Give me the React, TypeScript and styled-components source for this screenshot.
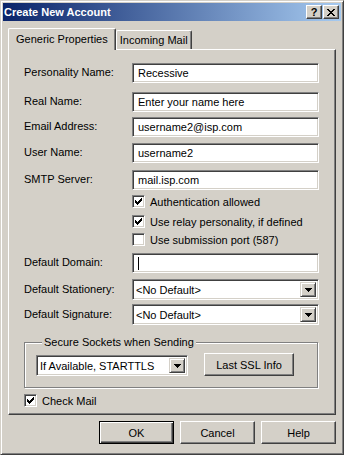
import React from 'react'
import styled, { createGlobalStyle } from 'styled-components'

const GlobalStyle = createGlobalStyle`
  html, body {
    margin: 0;
    padding: 0;
    background: #d4d0c8;
  }
  body {
    font-family: 'Liberation Sans', Arial, sans-serif;
    font-size: 11px;
    color: #000;
  }
`

const Window = styled.div`
  box-sizing: border-box;
  width: 344px;
  height: 455px;
  display: flex;
  flex-direction: column;
  background: #d4d0c8;
  border: 1px solid;
  border-color: #d4d0c8 #404040 #404040 #d4d0c8;
  box-shadow: inset 1px 1px #fff, inset -1px -1px #808080;
  padding: 2px;
`

const TitleBar = styled.div`
  height: 18px;
  display: flex;
  align-items: center;
  padding: 0 2px 0 1px;
  background: linear-gradient(to right, #0a246a, #a6caf0);
`

const TitleText = styled.div`
  flex: 1;
  color: #fff;
  font-weight: bold;
  font-size: 11px;
  line-height: 18px;
  white-space: nowrap;
`

const CaptionButton = styled.div<{ $gap?: number }>`
  box-sizing: border-box;
  width: 16px;
  height: 14px;
  margin-left: ${(p) => p.$gap ?? 0}px;
  display: flex;
  align-items: center;
  justify-content: center;
  background: #d4d0c8;
  border: 1px solid;
  border-color: #fff #404040 #404040 #fff;
  box-shadow: inset -1px -1px #808080;
  font-weight: bold;
  font-size: 11px;
  line-height: 12px;
`

const Body = styled.div`
  flex: 1;
  display: flex;
  flex-direction: column;
  padding: 7px 5px 6px 5px;
`

const TabStrip = styled.div`
  height: 22px;
  display: flex;
  align-items: flex-end;
  position: relative;
  z-index: 1;
`

const Tab = styled.div<{ $active?: boolean }>`
  box-sizing: border-box;
  height: ${(p) => (p.$active ? 22 : 19)}px;
  margin-bottom: ${(p) => (p.$active ? 0 : 1)}px;
  padding: 0 ${(p) => (p.$active ? 7 : 3)}px;
  padding-bottom: ${(p) => (p.$active ? 2 : 0)}px;
  display: flex;
  align-items: center;
  background: #d4d0c8;
  border-top: 1px solid #fff;
  border-left: 1px solid #fff;
  border-right: 1px solid #404040;
  border-top-left-radius: 2px;
  border-top-right-radius: 2px;
  box-shadow: inset -1px 0 #808080;
  white-space: nowrap;
`

const Panel = styled.div`
  box-sizing: border-box;
  height: 366px;
  margin-top: -1px;
  border: 1px solid;
  border-color: #fff #404040 #404040 #fff;
  box-shadow: inset -1px -1px #808080;
  padding: 13px 13px 0 15px;
  display: flex;
  flex-direction: column;
`

const FormRow = styled.div<{ $gap: number; $height?: number }>`
  display: grid;
  grid-template-columns: 108px 187px;
  align-items: center;
  height: ${(p) => p.$height ?? 20}px;
  margin-top: ${(p) => p.$gap}px;
`

const Label = styled.div`
  white-space: nowrap;
  line-height: 13px;
  padding-bottom: 1px;
`

const Field = styled.div`
  box-sizing: border-box;
  height: 100%;
  display: flex;
  align-items: center;
  background: #fff;
  border: 1px solid;
  border-color: #808080 #fff #fff #808080;
  box-shadow: inset 1px 1px #404040, inset -1px -1px #d4d0c8;
  padding: 1px 3px 1px 5px;
  white-space: nowrap;
  overflow: hidden;
`

const Caret = styled.span`
  width: 1px;
  height: 13px;
  background: #000;
`

const ComboBox = styled.div<{ $width?: number }>`
  box-sizing: border-box;
  width: ${(p) => (p.$width ? `${p.$width}px` : '100%')};
  height: 100%;
  display: flex;
  align-items: center;
  background: #fff;
  border: 1px solid;
  border-color: #808080 #fff #fff #808080;
  box-shadow: inset 1px 1px #404040, inset -1px -1px #d4d0c8;
  padding: 2px 2px 2px 3px;
`

const ComboText = styled.div`
  flex: 1;
  white-space: nowrap;
  overflow: hidden;
`

const DropButton = styled.div`
  box-sizing: border-box;
  width: 16px;
  height: 100%;
  display: flex;
  align-items: center;
  justify-content: center;
  background: #d4d0c8;
  border: 1px solid;
  border-color: #d4d0c8 #404040 #404040 #d4d0c8;
  box-shadow: inset 1px 1px #fff, inset -1px -1px #808080;
`

const CheckRow = styled.div<{ $gap: number; $column?: number }>`
  display: flex;
  align-items: center;
  gap: 5px;
  height: 13px;
  margin-top: ${(p) => p.$gap}px;
  margin-left: ${(p) => (p.$column === 2 ? 108 : 0)}px;
  white-space: nowrap;
`

const CheckBox = styled.span`
  box-sizing: border-box;
  width: 13px;
  height: 13px;
  flex: none;
  display: flex;
  align-items: center;
  justify-content: center;
  background: #fff;
  border: 1px solid;
  border-color: #808080 #fff #fff #808080;
  box-shadow: inset 1px 1px #404040, inset -1px -1px #d4d0c8;
`

const Group = styled.fieldset`
  box-sizing: border-box;
  width: 294px;
  min-width: 0;
  margin: 11px 0 0 0;
  padding: 4px 11px 11px 11px;
  border: 1px solid #808080;
  box-shadow: inset 1px 1px #fff, 1px 1px #fff;
  display: flex;
  align-items: flex-end;
  gap: 16px;
`

const Legend = styled.legend`
  margin-left: 6px;
  padding: 0 2px;
  line-height: 13px;
  background: #d4d0c8;
`

const GroupCombo = styled.div`
  height: 21px;
  display: flex;
`

const ButtonRow = styled.div`
  display: flex;
  justify-content: flex-end;
  gap: 6px;
  margin-top: 6px;
`

const Button = styled.div<{ $width?: number; $default?: boolean }>`
  box-sizing: border-box;
  width: ${(p) => p.$width ?? 75}px;
  height: 23px;
  display: flex;
  align-items: center;
  justify-content: center;
  background: #d4d0c8;
  border: 1px solid;
  border-color: ${(p) => (p.$default ? '#000' : '#fff #404040 #404040 #fff')};
  box-shadow: ${(p) =>
    p.$default
      ? 'inset 1px 1px #fff, inset -1px -1px #404040, inset -2px -2px #808080'
      : 'inset -1px -1px #808080'};
  white-space: nowrap;
`

const CheckMark = () => (
  <svg width="7" height="7" viewBox="0 0 7 7" shapeRendering="crispEdges">
    <path
      fill="#000"
      d="M6 0h1v1h-1z M5 1h2v1h-2z M0 2h1v1h-1z M4 2h3v1h-3z M0 3h2v1h-2z M3 3h3v1h-3z M0 4h5v1h-5z M1 5h3v1h-3z M2 6h1v1h-1z"
    />
  </svg>
)

const Arrow = () => (
  <svg width="7" height="4" viewBox="0 0 7 4" shapeRendering="crispEdges">
    <path fill="#000" d="M0 0h7v1h-7z M1 1h5v1h-5z M2 2h3v1h-3z M3 3h1v1h-1z" />
  </svg>
)

const CloseGlyph = () => (
  <svg width="8" height="7" viewBox="0 0 8 7" shapeRendering="crispEdges">
    <path
      fill="#000"
      d="M0 0h2v1h-2z M6 0h2v1h-2z M1 1h2v1h-2z M5 1h2v1h-2z M2 2h4v1h-4z M3 3h2v1h-2z M2 4h4v1h-4z M1 5h2v1h-2z M5 5h2v1h-2z M0 6h2v1h-2z M6 6h2v1h-2z"
    />
  </svg>
)

const Check = ({ checked, label, gap, column }: { checked?: boolean; label: string; gap: number; column?: number }) => (
  <CheckRow $gap={gap} $column={column}>
    <CheckBox>{checked && <CheckMark />}</CheckBox>
    <span>{label}</span>
  </CheckRow>
)

const Combo = ({ value, width }: { value: string; width?: number }) => (
  <ComboBox $width={width}>
    <ComboText>{value}</ComboText>
    <DropButton>
      <Arrow />
    </DropButton>
  </ComboBox>
)

const textFields = [
  { label: 'Personality Name:', value: 'Recessive', gap: 0 },
  { label: 'Real Name:', value: 'Enter your name here', gap: 9 },
  { label: 'Email Address:', value: 'username2@isp.com', gap: 5 },
  { label: 'User Name:', value: 'username2', gap: 6 },
  { label: 'SMTP Server:', value: 'mail.isp.com', gap: 7 },
]

export default function App() {
  return (
    <>
      <GlobalStyle />
      <Window>
        <TitleBar>
          <TitleText>Create New Account</TitleText>
          <CaptionButton>?</CaptionButton>
          <CaptionButton $gap={1}>
            <CloseGlyph />
          </CaptionButton>
        </TitleBar>
        <Body>
          <TabStrip>
            <Tab $active>Generic Properties</Tab>
            <Tab>Incoming Mail</Tab>
          </TabStrip>
          <Panel>
            {textFields.map((f) => (
              <FormRow key={f.label} $gap={f.gap}>
                <Label>{f.label}</Label>
                <Field>{f.value}</Field>
              </FormRow>
            ))}
            <Check checked label="Authentication allowed" gap={5} column={2} />
            <Check checked label="Use relay personality, if defined" gap={7} column={2} />
            <Check label="Use submission port (587)" gap={5} column={2} />
            <FormRow $gap={7}>
              <Label>Default Domain:</Label>
              <Field>
                <Caret />
              </Field>
            </FormRow>
            <FormRow $gap={6} $height={21}>
              <Label>Default Stationery:</Label>
              <Combo value="<No Default>" />
            </FormRow>
            <FormRow $gap={4} $height={21}>
              <Label>Default Signature:</Label>
              <Combo value="<No Default>" />
            </FormRow>
            <Group>
              <Legend>Secure Sockets when Sending</Legend>
              <GroupCombo>
                <Combo value="If Available, STARTTLS" width={152} />
              </GroupCombo>
              <Button $width={90}>Last SSL Info</Button>
            </Group>
            <Check checked label="Check Mail" gap={6} />
          </Panel>
          <ButtonRow>
            <Button $default>OK</Button>
            <Button>Cancel</Button>
            <Button>Help</Button>
          </ButtonRow>
        </Body>
      </Window>
    </>
  )
}
